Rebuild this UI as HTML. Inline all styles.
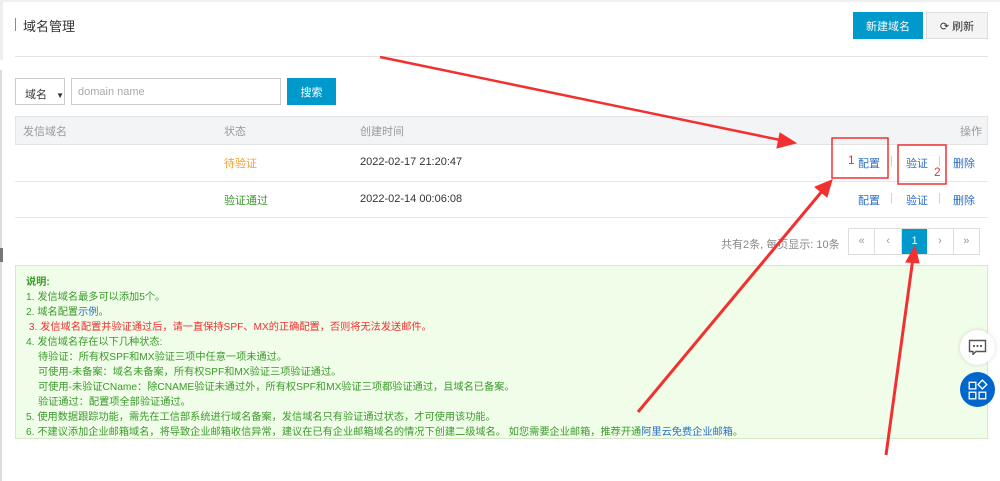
<!DOCTYPE html>
<html><head><meta charset="utf-8"><style>
*{margin:0;padding:0;box-sizing:border-box}
body{width:1000px;height:481px;background:#fff;font-family:"Liberation Sans","Noto Sans CJK SC",sans-serif;font-size:11px;color:#333;position:relative;overflow:hidden}
.a{position:absolute}
.btn{position:absolute;display:flex;align-items:center;justify-content:center;font-size:11px}
.g{color:#3c9a2d}
.gl{position:absolute;left:26px;font-size:10.2px;white-space:nowrap}
.lk{color:#2c6fc2}
</style></head><body>
<div class="a" style="left:0;top:0;width:1000px;height:2px;background:#f0f0f0"></div>
<div class="a" style="left:0;top:0;width:3px;height:60px;background:#eee"></div>
<div class="a" style="left:0;top:70px;width:2px;height:411px;background:#ddd"></div>
<div class="a" style="left:0;top:248px;width:3px;height:14px;background:#777"></div>
<div class="a" style="left:15px;top:18px;width:1px;height:13px;background:#6a8fd0"></div>
<div class="a" style="left:23px;top:16px;font-size:13px;color:#333">域名管理</div>
<div class="btn" style="left:853px;top:12px;width:70px;height:27px;background:#0099cc;color:#fff">新建域名</div>
<div class="btn" style="left:926px;top:12px;width:62px;height:27px;background:#f4f4f4;border:1px solid #ddd;color:#333">⟳&nbsp;刷新</div>
<div class="a" style="left:15px;top:56px;width:973px;height:1px;background:#e3e3e3"></div>
<div class="a" style="left:15px;top:78px;width:50px;height:27px;border:1px solid #ccc;padding:7px 0 0 9px">域名 <span style="font-size:8px;margin-left:6px">▼</span></div>
<div class="a" style="left:71px;top:78px;width:210px;height:27px;border:1px solid #ccc;padding:7px 0 0 6px;color:#aaa">domain name</div>
<div class="btn" style="left:287px;top:78px;width:49px;height:27px;background:#0099cc;color:#fff">搜索</div>
<div class="a" style="left:15px;top:116px;width:973px;height:29px;background:#f3f4f6;border:1px solid #e3e3e3"></div>
<div class="a" style="left:23px;top:123px;color:#999">发信域名</div>
<div class="a" style="left:224px;top:123px;color:#999">状态</div>
<div class="a" style="left:360px;top:123px;color:#999">创建时间</div>
<div class="a" style="left:960px;top:123px;color:#999">操作</div>
<div class="a" style="left:15px;top:181px;width:973px;height:1px;background:#e8e8e8"></div>
<div class="a" style="left:15px;top:217px;width:973px;height:1px;background:#e8e8e8"></div>
<div class="a" style="left:224px;top:155px;color:#f0a030">待验证</div>
<div class="a" style="left:360px;top:156px">2022-02-17 21:20:47</div>
<div class="a" style="left:224px;top:192px;color:#3c9a2d">验证通过</div>
<div class="a" style="left:360px;top:193px">2022-02-14 00:06:08</div>
<div class="a lk" style="left:858px;top:155px">配置</div><div class="a" style="left:890px;top:155px;color:#ccc">|</div><div class="a lk" style="left:906px;top:155px">验证</div><div class="a" style="left:938px;top:155px;color:#ccc">|</div><div class="a lk" style="left:953px;top:155px">删除</div>
<div class="a lk" style="left:858px;top:192px">配置</div><div class="a" style="left:890px;top:192px;color:#ccc">|</div><div class="a lk" style="left:906px;top:192px">验证</div><div class="a" style="left:938px;top:192px;color:#ccc">|</div><div class="a lk" style="left:953px;top:192px">删除</div>
<div class="a" style="left:721px;top:236px;color:#888">共有2条, 每页显示: 10条</div>
<div class="a" style="left:848px;top:228px;width:132px;height:27px;border:1px solid #ddd;display:flex;color:#999">
<div style="flex:1;border-right:1px solid #ddd;text-align:center;line-height:25px">«</div><div style="flex:1;border-right:1px solid #ddd;text-align:center;line-height:25px">‹</div><div style="flex:1;background:#0099cc;color:#fff;text-align:center;line-height:25px">1</div><div style="flex:1;border-right:1px solid #ddd;text-align:center;line-height:25px">›</div><div style="flex:1;text-align:center;line-height:25px">»</div></div>
<div class="a" style="left:15px;top:265px;width:973px;height:174px;background:#f0fde8;border:1px solid #d6e9c6"></div>
<div class="g">
<div class="gl" style="top:273px;font-weight:bold">说明:</div>
<div class="gl" style="top:288px">1. 发信域名最多可以添加5个。</div>
<div class="gl" style="top:303px">2. 域名配置<span class="lk">示例</span>。</div>
<div class="gl" style="top:318px;color:#f03030">&nbsp;3. 发信域名配置并验证通过后，请一直保持SPF、MX的正确配置，否则将无法发送邮件。</div>
<div class="gl" style="top:333px">4. 发信域名存在以下几种状态:</div>
<div class="gl" style="top:348px;left:38px">待验证：所有权SPF和MX验证三项中任意一项未通过。</div>
<div class="gl" style="top:363px;left:38px">可使用-未备案：域名未备案，所有权SPF和MX验证三项验证通过。</div>
<div class="gl" style="top:378px;left:38px">可使用-未验证CName：除CNAME验证未通过外，所有权SPF和MX验证三项都验证通过，且域名已备案。</div>
<div class="gl" style="top:393px;left:38px">验证通过：配置项全部验证通过。</div>
<div class="gl" style="top:408px">5. 使用数据跟踪功能，需先在工信部系统进行域名备案，发信域名只有验证通过状态，才可使用该功能。</div>
<div class="gl" style="top:423px">6. 不建议添加企业邮箱域名，将导致企业邮箱收信异常，建议在已有企业邮箱域名的情况下创建二级域名。 如您需要企业邮箱，推荐开通<span class="lk">阿里云免费企业邮箱</span>。</div>
</div>
<div class="a" style="left:960px;top:330px;width:35px;height:35px;border-radius:50%;background:#fff;box-shadow:0 0 4px rgba(0,0,0,.15)"></div>
<svg class="a" style="left:968px;top:339px" width="19" height="16" viewBox="0 0 19 16"><path d="M1.5 1.5h16v11H8l-3 3v-3H1.5z" fill="none" stroke="#555" stroke-width="1.4"/><circle cx="6" cy="7" r="1.1" fill="#555"/><circle cx="9.5" cy="7" r="1.1" fill="#555"/><circle cx="13" cy="7" r="1.1" fill="#555"/></svg>
<div class="a" style="left:960px;top:372px;width:35px;height:35px;border-radius:50%;background:#0066cc"></div>
<svg class="a" style="left:967px;top:379px" width="22" height="22" viewBox="0 0 20 20" fill="none" stroke="#fff" stroke-width="1.2"><rect x="2" y="3" width="6" height="6"/><rect x="2" y="12" width="6" height="6"/><rect x="11" y="12" width="6" height="6"/><path d="M14 1l4 4-4 4-4-4z"/></svg>
<svg class="a" style="left:0;top:0" width="1000" height="481">
<g stroke="#f23030" fill="#f23030">
<line x1="380" y1="57" x2="785" y2="141" stroke-width="2.5"/><polygon points="796,143 780,133 777,148"/>
<line x1="638" y1="412" x2="823" y2="190" stroke-width="3"/><polygon points="832,180 815,187 827,197"/>
<line x1="886" y1="455" x2="913" y2="258" stroke-width="3"/><polygon points="915,246 906,262 919,263"/>
<rect x="832" y="138" width="56" height="40" fill="none" stroke-width="1.5"/>
<rect x="898" y="145" width="48" height="39" fill="none" stroke-width="1.5"/>
</g>
<text x="848" y="164" fill="#f23030" font-size="12" font-family="Liberation Sans">1</text>
<text x="934" y="176" fill="#f23030" font-size="12" font-family="Liberation Sans">2</text>
</svg>
</body></html>
